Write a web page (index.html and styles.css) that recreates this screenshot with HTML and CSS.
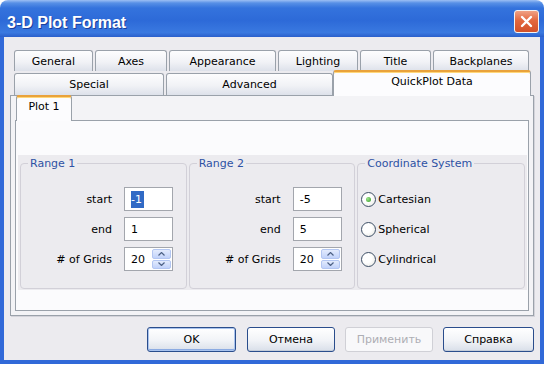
FILE: index.html
```html
<!DOCTYPE html>
<html lang="en">
<head>
    <meta charset="UTF-8">
    <title>3-D Plot Format</title>
    <link rel="stylesheet" href="styles.css">
</head>
<body>
    <div class="window">
        <div class="titlebar">
            <span class="title">3-D Plot Format</span>
            <div class="close">
                <svg width="13" height="13" viewBox="0 0 13 13">
                    <path d="M2 2 L11 11 M11 2 L2 11" stroke="#fff" stroke-width="2.4" stroke-linecap="round"/>
                </svg>
            </div>
        </div>

        <div class="client">
            <div class="tabs">
                <div class="tab-row">
                    <div class="tab w-general">General</div>
                    <div class="tab w-axes">Axes</div>
                    <div class="tab w-appearance">Appearance</div>
                    <div class="tab w-lighting">Lighting</div>
                    <div class="tab w-title">Title</div>
                    <div class="tab w-backplanes">Backplanes</div>
                </div>
                <div class="tab-row front">
                    <div class="tab w-special">Special</div>
                    <div class="tab w-advanced">Advanced</div>
                    <div class="tab active w-quickplot">QuickPlot Data</div>
                </div>
            </div>

            <div class="tab-panel">
                <div class="subtabs">
                    <div class="tab active w-plot">Plot 1</div>
                </div>
                <div class="subpanel">
                    <div class="groups">
                        <fieldset class="group">
                            <legend>Range 1</legend>
                            <div class="range">
                                <span class="label">start</span>
                                <div class="field"><span class="sel">-1</span></div>
                                <span class="label">end</span>
                                <div class="field">1</div>
                                <span class="label"># of Grids</span>
                                <div class="field spin">
                                    <span>20</span>
                                    <div class="spin-btns">
                                        <div class="spin-btn"><svg width="7" height="4" viewBox="0 0 7 4"><path d="M0.5 3.5 L3.5 0.5 L6.5 3.5" fill="none" stroke="#4D6185" stroke-width="1.2"/></svg></div>
                                        <div class="spin-btn"><svg width="7" height="4" viewBox="0 0 7 4"><path d="M0.5 0.5 L3.5 3.5 L6.5 0.5" fill="none" stroke="#4D6185" stroke-width="1.2"/></svg></div>
                                    </div>
                                </div>
                            </div>
                        </fieldset>

                        <fieldset class="group">
                            <legend>Range 2</legend>
                            <div class="range">
                                <span class="label">start</span>
                                <div class="field">-5</div>
                                <span class="label">end</span>
                                <div class="field">5</div>
                                <span class="label"># of Grids</span>
                                <div class="field spin">
                                    <span>20</span>
                                    <div class="spin-btns">
                                        <div class="spin-btn"><svg width="7" height="4" viewBox="0 0 7 4"><path d="M0.5 3.5 L3.5 0.5 L6.5 3.5" fill="none" stroke="#4D6185" stroke-width="1.2"/></svg></div>
                                        <div class="spin-btn"><svg width="7" height="4" viewBox="0 0 7 4"><path d="M0.5 0.5 L3.5 3.5 L6.5 0.5" fill="none" stroke="#4D6185" stroke-width="1.2"/></svg></div>
                                    </div>
                                </div>
                            </div>
                        </fieldset>

                        <fieldset class="group wide">
                            <legend>Coordinate System</legend>
                            <div class="radios">
                                <div class="radio-row"><span class="radio on"></span>Cartesian</div>
                                <div class="radio-row"><span class="radio"></span>Spherical</div>
                                <div class="radio-row"><span class="radio"></span>Cylindrical</div>
                            </div>
                        </fieldset>
                    </div>
                </div>
            </div>

            <div class="buttons">
                <div class="btn default w-ok">OK</div>
                <div class="btn w-cancel">Отмена</div>
                <div class="btn disabled w-apply">Применить</div>
                <div class="btn w-help">Справка</div>
            </div>
        </div>
    </div>
</body>
</html>
```

FILE: styles.css
```css
:root {
    --frame: #3169d8;
    --face: #ecebef;
    --tab-border: #9aa1aa;
    --legend: #2e52a4;
    --orange: #e9a23b;
}

* {
    box-sizing: border-box;
}

body {
    margin: 0;
    background: #fff;
    color: #000;
    font-family: "DejaVu Sans", Verdana, sans-serif;
    font-size: 11px;
}

.window {
    width: 544px;
    height: 364px;
    display: flex;
    flex-direction: column;
}

/* title bar */
.titlebar {
    height: 37px;
    flex: none;
    display: flex;
    align-items: center;
    justify-content: space-between;
    padding: 6px 5px 0 7px;
    border-radius: 8px 8px 0 0;
    background: linear-gradient(to bottom, #9cbff4 0, #5790e6 3px, #3473dd 8px, #2d6ad8 55%, #3a79e0 88%, #2a5fcb 100%);
}

.title {
    margin-top: 2px;
    color: #fff;
    font: bold 16px "Liberation Sans", Arial, sans-serif;
    text-shadow: 1px 1px 0 #1b3f9c;
}

.close {
    width: 25px;
    height: 23px;
    display: flex;
    align-items: center;
    justify-content: center;
    border: 1px solid #f4f4f4;
    border-radius: 3px;
    background: linear-gradient(to bottom, #f0a285, #e3683f 45%, #d2512a);
}

/* client area */
.client {
    flex: 1;
    display: flex;
    flex-direction: column;
    background: var(--face);
    border: 4px solid var(--frame);
    border-top: 0;
}

.tabs {
    padding: 13px 0 0 10px;
}

.tab-row {
    display: flex;
    height: 21px;
}

.tab-row.front {
    height: 24px;
    align-items: flex-end;
}

.tab {
    height: 21px;
    margin-right: 2px;
    border: 1px solid var(--tab-border);
    border-bottom: 0;
    border-radius: 3px 3px 0 0;
    background: linear-gradient(to bottom, #fdfdfe, #f1f2f6 55%, #dde1ea);
    text-align: center;
    line-height: 21px;
}

.front .tab {
    height: 22px;
    line-height: 21px;
}

.tab.active,
.front .tab.active {
    position: relative;
    z-index: 1;
    height: 26px;
    margin-bottom: -1px;
    border-top: 2px solid var(--orange);
    background: #fcfcfe;
    box-shadow: inset 0 1px 0 #ffd77a;
    line-height: 20px;
}

.w-general { width: 79px; }
.w-axes { width: 72px; }
.w-appearance { width: 107px; }
.w-lighting { width: 80px; }
.w-title { width: 71px; }
.w-backplanes { width: 96px; }
.w-special { width: 150px; }
.w-advanced { width: 167px; margin-right: 0 !important; }
.w-quickplot { width: 198px; }
.w-plot { width: 56px; margin-left: 1px; }

.tab-panel {
    height: 221px;
    margin: 0 6px;
    padding: 0 4px 4px;
    display: flex;
    flex-direction: column;
    border: 1px solid var(--tab-border);
    background: #f3f3f6;
    box-shadow: 1px 1px 0 #d3d3da;
}

.subtabs {
    height: 24px;
    display: flex;
    align-items: flex-end;
}

.subpanel {
    flex: 1;
    padding-top: 34px;
    border: 1px solid var(--tab-border);
    background: #fbfbfd;
}

.groups {
    height: 135px;
    margin: 0 1px 0 2px;
    padding: 2px 2px 1px;
    display: flex;
    gap: 2px;
    background: var(--face);
}

.group {
    width: 167px;
    height: 132px;
    margin: 0;
    padding: 17px 0 0;
    border: 1px solid #d2d0d8;
    border-radius: 4px;
}

.group.wide {
    width: 168px;
}

.group legend {
    margin-left: 7px;
    padding: 0 2px;
    color: var(--legend);
    line-height: 13px;
}

.range {
    display: grid;
    grid-template-columns: 91px 49px;
    grid-auto-rows: 24px;
    column-gap: 12px;
    row-gap: 6px;
    align-items: center;
}

.label {
    text-align: right;
}

.field {
    height: 24px;
    display: flex;
    align-items: center;
    padding-left: 6px;
    border: 1px solid #a3a6ad;
    background: #fff;
}

.sel {
    display: inline-block;
    line-height: 17px;
    padding: 0 2px 0 0;
    background: #316ac5;
    color: #fff;
}

.spin-btns {
    width: 19px;
    height: 20px;
    margin: 0 1px 0 auto;
    display: flex;
    flex-direction: column;
    gap: 1px;
}

.spin-btn {
    flex: 1;
    display: flex;
    align-items: center;
    justify-content: center;
    border: 1px solid #b3c6f2;
    border-radius: 2px;
    background: linear-gradient(to bottom, #e3ebfd, #c1d2fa);
}

.radios {
    display: grid;
    grid-auto-rows: 24px;
    row-gap: 6px;
    padding-left: 3px;
}

.radio-row {
    display: flex;
    align-items: center;
    gap: 2px;
}

.radio {
    width: 15px;
    height: 15px;
    display: flex;
    align-items: center;
    justify-content: center;
    border: 1px solid #3d4f66;
    border-radius: 50%;
    background: radial-gradient(circle at 40% 40%, #fff 40%, #e2e2dc);
}

.radio.on::after {
    content: "";
    width: 5px;
    height: 5px;
    border-radius: 50%;
    background: radial-gradient(circle at 35% 35%, #9ee58c, #2f9a22);
}

/* dialog buttons */
.buttons {
    display: flex;
    justify-content: flex-end;
    gap: 10px;
    padding: 11px 6px 0 0;
}

.btn {
    height: 25px;
    display: flex;
    align-items: center;
    justify-content: center;
    border: 1px solid #2a4d8c;
    border-radius: 3px;
    background: linear-gradient(to bottom, #ffffff, #f1f3f7 55%, #d9dfe9);
    box-shadow: inset 0 -1px 0 #c4ccd9;
}

.btn.default {
    box-shadow: inset 0 0 0 1px #a9c3ee, inset 0 -2px 0 #8cabe2;
}

.btn.disabled {
    border-color: #d0d0d6;
    background: #f8f8fa;
    box-shadow: none;
    color: #aeaeb4;
}

.w-ok { width: 89px; margin-right: 1px; }
.w-cancel { width: 88px; }
.w-apply { width: 88px; }
.w-help { width: 91px; }
```
